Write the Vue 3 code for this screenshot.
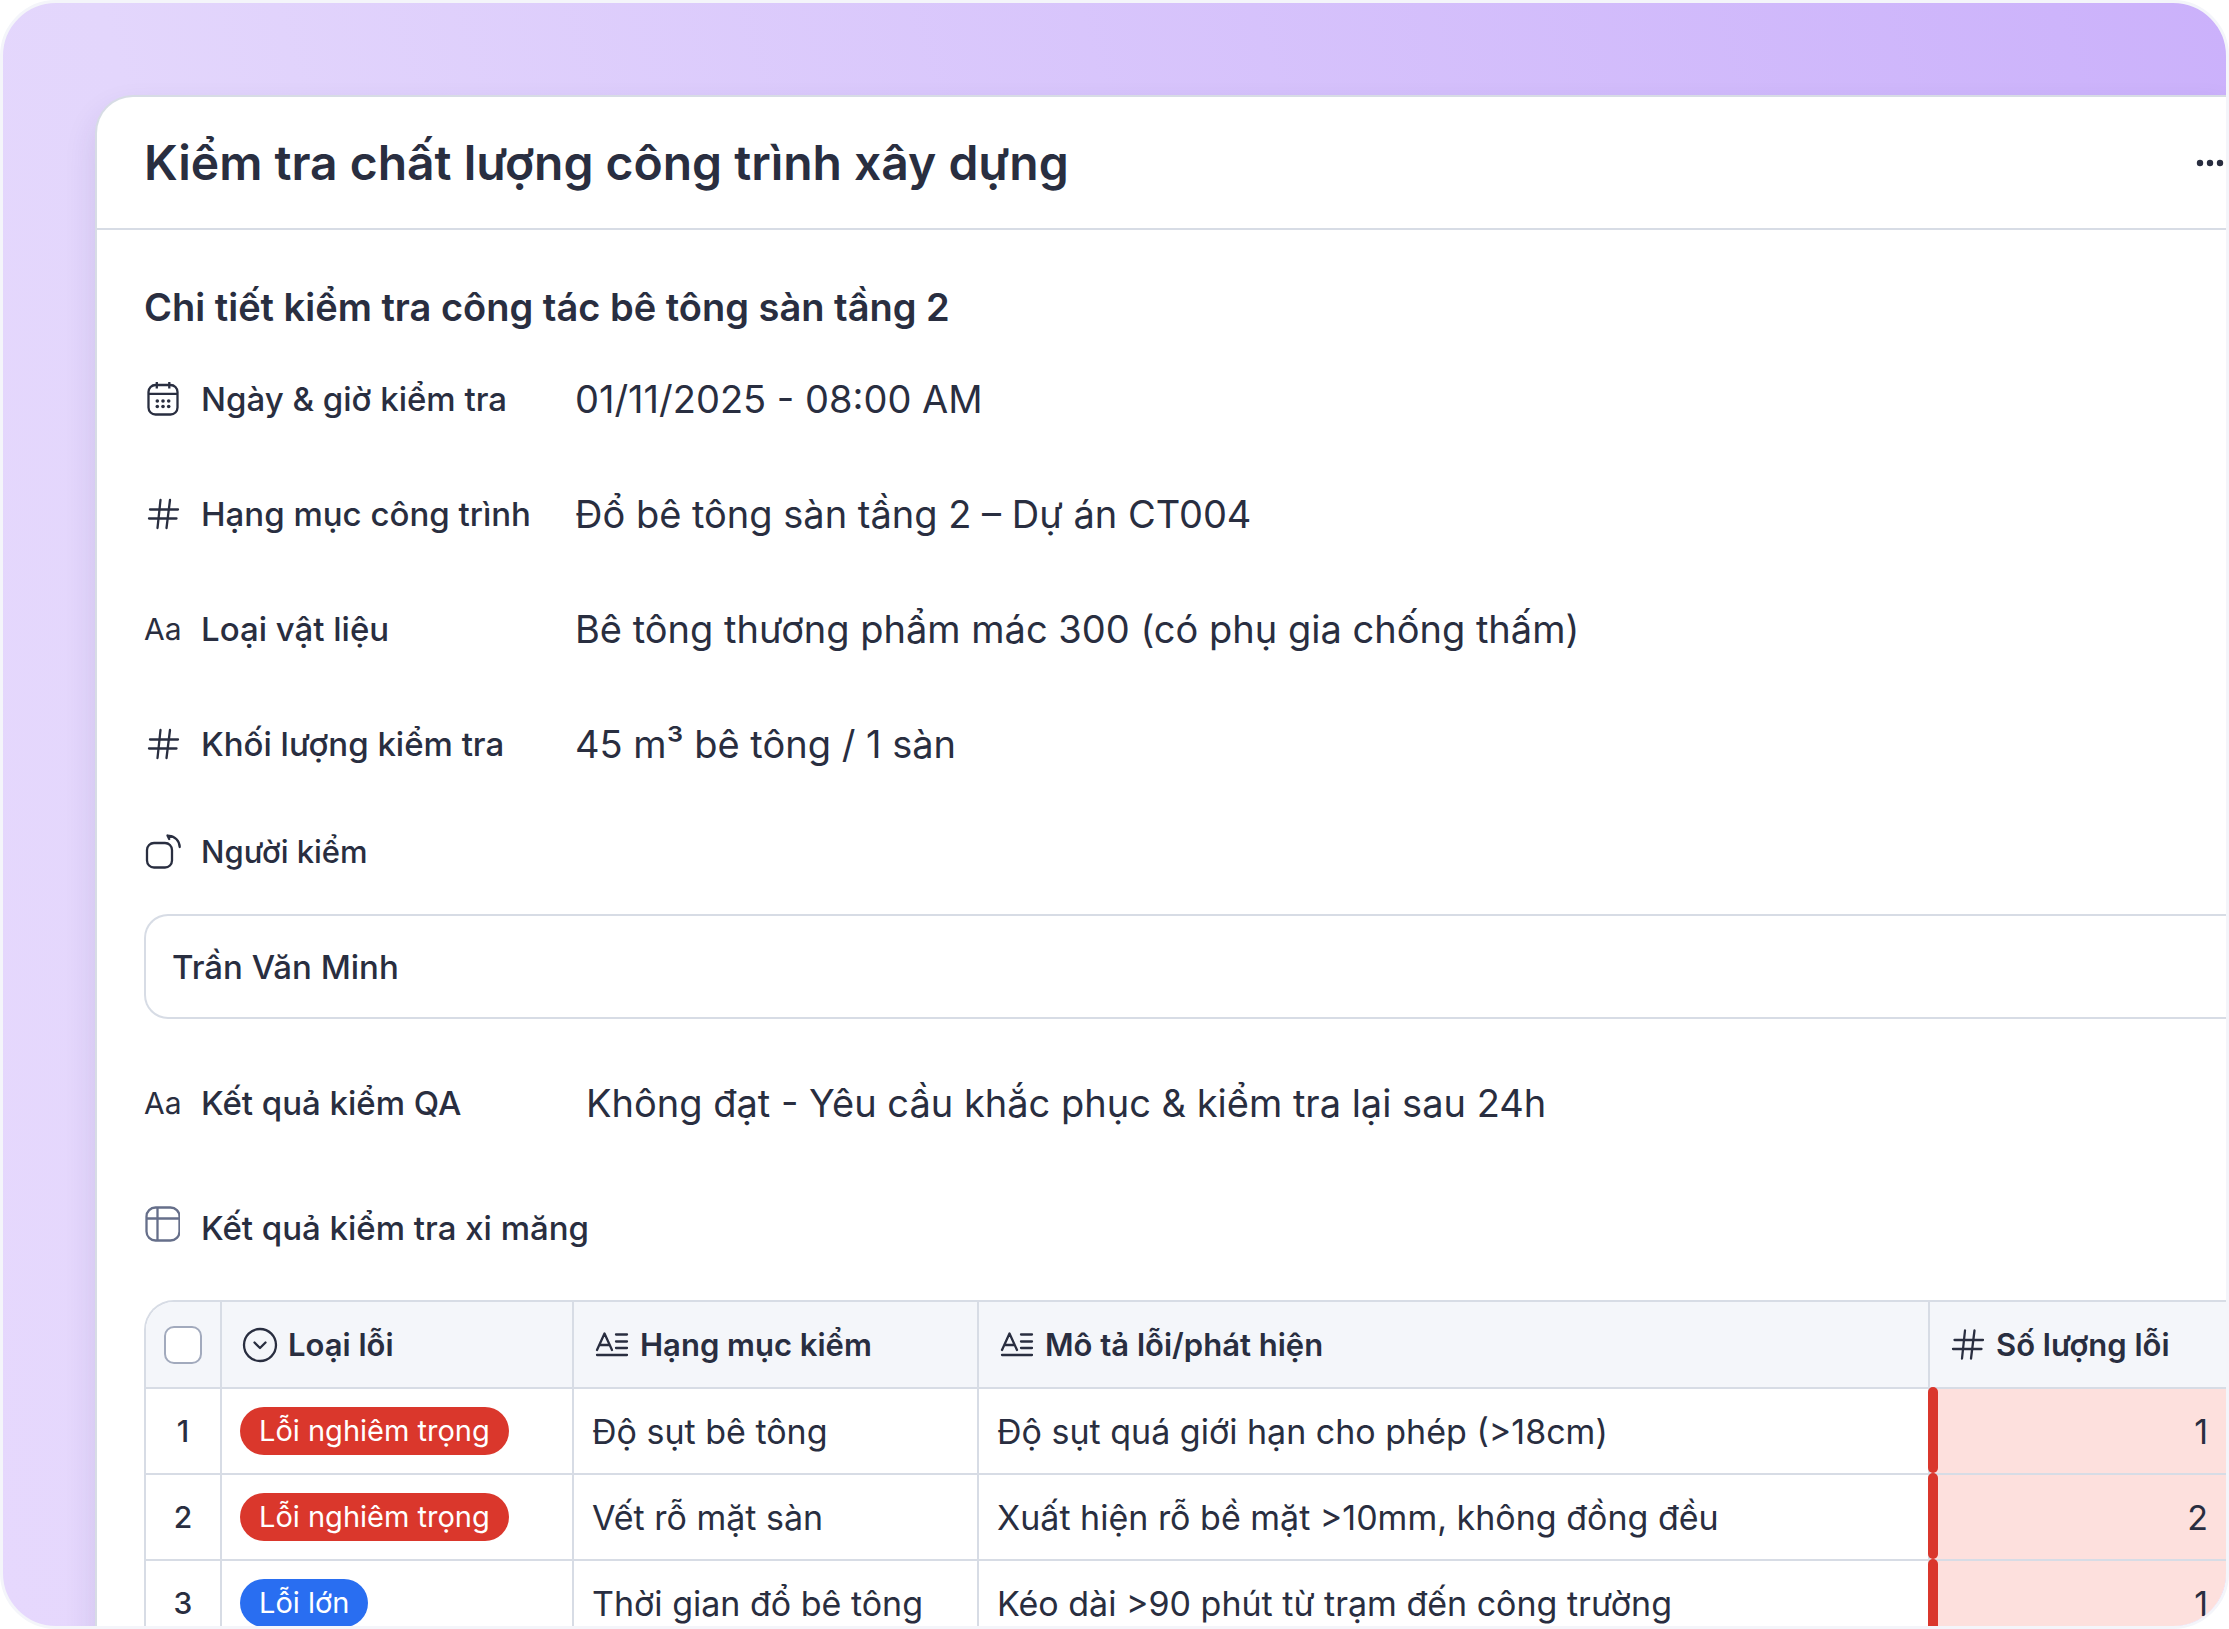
<script setup>
import { ref } from 'vue'

const details = [
  { icon: 'calendar', label: 'Ngày & giờ kiểm tra', value: '01/11/2025 - 08:00 AM' },
  { icon: 'hash', label: 'Hạng mục công trình', value: 'Đổ bê tông sàn tầng 2 – Dự án CT004' },
  { icon: 'text', label: 'Loại vật liệu', value: 'Bê tông thương phẩm mác 300 (có phụ gia chống thấm)' },
  { icon: 'hash', label: 'Khối lượng kiểm tra', value: '45 m³ bê tông / 1 sàn' },
]

const inspector = ref('Trần Văn Minh')
const allSelected = ref(false)

const defects = [
  { level: 'Lỗi nghiêm trọng', tone: 'red', item: 'Độ sụt bê tông', note: 'Độ sụt quá giới hạn cho phép (>18cm)', count: 1 },
  { level: 'Lỗi nghiêm trọng', tone: 'red', item: 'Vết rỗ mặt sàn', note: 'Xuất hiện rỗ bề mặt >10mm, không đồng đều', count: 2 },
  { level: 'Lỗi lớn', tone: 'blue', item: 'Thời gian đổ bê tông', note: 'Kéo dài >90 phút từ trạm đến công trường', count: 1 },
]
</script>

<template>
  <div class="frame">
    <main class="panel">
      <header class="panel-header">
        <h1>Kiểm tra chất lượng công trình xây dựng</h1>
        <button type="button" class="more" aria-label="Tùy chọn">
          <svg width="28" height="8" viewBox="0 0 28 8" fill="currentColor">
            <circle cx="4" cy="4" r="3.200" /><circle cx="14" cy="4" r="3.200" /><circle cx="24" cy="4" r="3.200" />
          </svg>
        </button>
      </header>

      <div class="content">
        <h2>Chi tiết kiểm tra công tác bê tông sàn tầng 2</h2>

        <div class="details">
          <div v-for="d in details" :key="d.label" class="row">
            <span class="icon">
              <svg v-if="d.icon === 'calendar'" width="36" height="36" viewBox="0 0 36 36" fill="none" stroke="currentColor" stroke-width="2.300">
                <rect x="4.500" y="4" width="29" height="29.500" rx="7" />
                <path d="M4.500 12.800h29M12.800 1v6.500M25.300 1v6.500" />
                <g fill="currentColor" stroke="none">
                  <circle cx="13.300" cy="20" r="1.800" /><circle cx="19" cy="20" r="1.800" /><circle cx="24.700" cy="20" r="1.800" />
                  <circle cx="13.300" cy="25.500" r="1.800" /><circle cx="19" cy="25.500" r="1.800" /><circle cx="24.700" cy="25.500" r="1.800" />
                </g>
              </svg>
              <svg v-else-if="d.icon === 'hash'" width="36" height="36" viewBox="0 0 36 36" fill="none" stroke="currentColor" stroke-width="2.300" stroke-linecap="round">
                <path d="M6 13.500H34M5 22.500H32.500M16.500 4L13.500 32M26 4L22.500 32" />
              </svg>
              <span v-else class="aa">Aa</span>
            </span>
            <span class="label">{{ d.label }}</span>
            <span class="value">{{ d.value }}</span>
          </div>
        </div>

        <div class="row person">
          <span class="icon">
            <svg width="37" height="36" viewBox="0 0 37 36" fill="none" stroke="currentColor" stroke-width="2.300" stroke-linecap="round" stroke-linejoin="round">
              <rect x="3" y="10" width="25" height="24.500" rx="7" />
              <path d="M25 3C31 3.200 35.500 8 35.700 14" />
              <path d="M27.500 3.600L23.500 2.500L25.200 6" fill="currentColor" />
            </svg>
          </span>
          <label class="label small" for="inspector">Người kiểm</label>
        </div>
        <input id="inspector" v-model="inspector" class="field" type="text" />

        <div class="row result">
          <span class="icon"><span class="aa">Aa</span></span>
          <span class="label">Kết quả kiểm QA</span>
          <span class="value">Không đạt - Yêu cầu khắc phục &amp; kiểm tra lại sau 24h</span>
        </div>

        <div class="row cement">
          <span class="icon muted">
            <svg width="36" height="36" viewBox="0 0 36 36" fill="none" stroke="currentColor" stroke-width="2.300">
              <rect x="2.500" y="1.500" width="33" height="33" rx="9" />
              <path d="M2.500 12.500H35.500M13.500 1.500V34.500" />
            </svg>
          </span>
          <span id="cement-title" class="label">Kết quả kiểm tra xi măng</span>
        </div>

        <div class="table-wrap">
          <table aria-labelledby="cement-title">
            <colgroup>
              <col class="c-index" /><col class="c-level" /><col class="c-item" /><col /><col class="c-count" />
            </colgroup>
            <thead>
              <tr>
                <th class="index"><input v-model="allSelected" type="checkbox" aria-label="Chọn tất cả" /></th>
                <th>
                  <div class="head">
                    <svg width="36" height="36" viewBox="0 0 36 36" fill="none" stroke="currentColor" stroke-width="2.300" stroke-linecap="round" stroke-linejoin="round">
                      <circle cx="18" cy="18" r="16" /><path d="M12.500 15.500L18 21L23.500 15.500" />
                    </svg>
                    Loại lỗi
                  </div>
                </th>
                <th v-for="t in ['Hạng mục kiểm', 'Mô tả lỗi/phát hiện']" :key="t">
                  <div class="head">
                    <svg width="36" height="36" viewBox="0 0 36 36" fill="none" stroke="currentColor" stroke-width="2.300" stroke-linecap="round" stroke-linejoin="round">
                      <path d="M3 23L10.500 6.500L18 23M5.500 18H15.500M22 7.500H33M22 14.500H33M22 21H33M3 28H33" />
                    </svg>
                    {{ t }}
                  </div>
                </th>
                <th>
                  <div class="head">
                    <svg width="36" height="36" viewBox="0 0 36 36" fill="none" stroke="currentColor" stroke-width="2.300" stroke-linecap="round">
                      <path d="M4.500 13H33M3 22H31.500M15 3.500L12 31.500M24.500 3.500L21 31.500" />
                    </svg>
                    Số lượng lỗi
                  </div>
                </th>
              </tr>
            </thead>
            <tbody>
              <tr v-for="(r, i) in defects" :key="i">
                <td class="index">{{ i + 1 }}</td>
                <td><span class="pill" :class="r.tone">{{ r.level }}</span></td>
                <td>{{ r.item }}</td>
                <td>{{ r.note }}</td>
                <td class="count">{{ r.count }}</td>
              </tr>
            </tbody>
          </table>
        </div>
      </div>
    </main>
  </div>
</template>

<style>
html,
body {
  background: #fff;
}
</style>

<style scoped>
* {
  box-sizing: border-box;
}

.frame {
  height: 100vh;
  padding: 92px 0 0 92px;
  overflow: hidden;
  border: 3px solid #f4f5fa;
  border-radius: 56px;
  background: linear-gradient(75deg, #e6d8fd 0%, #e3d6fc 20%, #cbb1fb 100%);
  color: #292e40;
  font-family: Inter, "Noto Sans", sans-serif;
}

.panel {
  min-height: 100%;
  border: 2px solid #d7dce5;
  border-right: 0;
  border-bottom: 0;
  border-top-left-radius: 38px;
  background: #fff;
  box-shadow: 0 16px 32px rgba(50, 45, 110, 0.12);
}

.panel-header {
  display: flex;
  align-items: center;
  justify-content: space-between;
  height: 133px;
  padding: 0 2px 0 47px;
  border-bottom: 2px solid #d7dce5;
}

h1,
h2 {
  margin: 0;
  font-weight: 600;
}

h1 {
  font-size: 48px;
}

h2 {
  font-size: 38px;
  line-height: 56px;
}

.more {
  display: flex;
  padding: 0;
  border: 0;
  background: none;
  color: inherit;
}

.content {
  padding: 49px 0 0 47px;
}

.details {
  display: flex;
  flex-direction: column;
  gap: 59px;
  margin-top: 36px;
}

.row {
  display: flex;
  align-items: center;
  height: 56px;
  white-space: nowrap;
}

.icon {
  display: flex;
  width: 57px;
}

.muted {
  padding-bottom: 8px;
  color: #666f8a;
}

.aa {
  font-size: 30px;
}

.label {
  width: 374px;
  font-size: 33px;
  font-weight: 500;
}

.small {
  font-size: 31px;
}

.value {
  font-size: 38px;
}

.person {
  margin-top: 51px;
}

.field {
  display: block;
  width: 100%;
  height: 105px;
  margin-top: 35px;
  padding: 0 26px;
  border: 2px solid #d7dce5;
  border-right: 0;
  border-radius: 24px 0 0 24px;
  background: #fff;
  color: inherit;
  font: 500 33px Inter, "Noto Sans", sans-serif;
}

.result {
  margin-top: 56px;
}

.result .value {
  padding-left: 11px;
}

.cement {
  margin-top: 69px;
}

.table-wrap {
  margin-top: 44px;
  overflow: hidden;
  border: 2px solid #d7dce5;
  border-width: 2px 0 0 2px;
  border-top-left-radius: 30px;
}

table {
  width: 100%;
  table-layout: fixed;
  border-collapse: separate;
  border-spacing: 0;
  white-space: nowrap;
}

.c-index {
  width: 76px;
}

.c-level {
  width: 352px;
}

.c-item {
  width: 405px;
}

.c-count {
  width: 296px;
}

th,
td {
  height: 86px;
  padding: 0 18px;
  border-right: 2px solid #d7dce5;
  border-bottom: 2px solid #d7dce5;
  text-align: left;
  font-size: 34px;
  font-weight: 400;
}

th:last-child,
td:last-child {
  border-right: 0;
}

th {
  height: 87px;
  padding: 0 20px;
  background: #f4f6fa;
  font-size: 31px;
  font-weight: 600;
}

.index {
  padding: 0;
  text-align: center;
}

td.index {
  font-size: 30px;
  font-weight: 500;
}

.index input {
  display: block;
  width: 38px;
  height: 38px;
  margin: 0 auto;
  appearance: none;
  border: 2px solid #a2aabd;
  border-radius: 10px;
  background: #fff;
}

.head {
  display: flex;
  align-items: center;
  gap: 10px;
}

.pill {
  display: inline-block;
  padding: 0 19px;
  border-radius: 24px;
  color: #fff;
  font-size: 29px;
  line-height: 48px;
  vertical-align: middle;
}

.red {
  background: #da372c;
}

.blue {
  background: #296ef1;
}

.count {
  position: relative;
  background: #fde0dd;
  text-align: right;
}

.count::before {
  content: "";
  position: absolute;
  top: -2px;
  bottom: 0;
  left: -2px;
  width: 10px;
  border-radius: 5px;
  background: #da372c;
}
</style>
